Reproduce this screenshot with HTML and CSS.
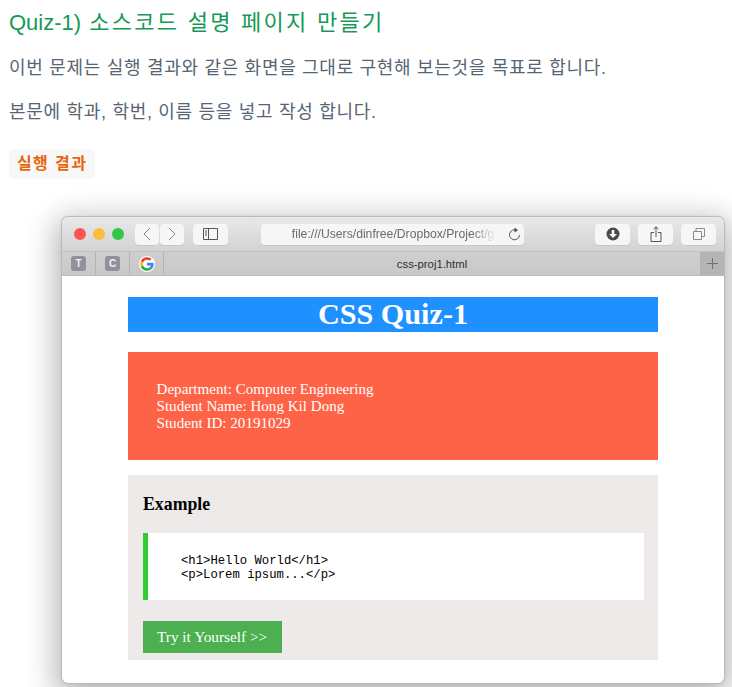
FILE: index.html
```html
<!DOCTYPE html>
<html lang="ko">
<head>
<meta charset="utf-8">
<title>Quiz-1</title>
<link rel="stylesheet" href="styles.css">
</head>
<body>
<main class="doc">
  <h2 class="title">Quiz-1) <span class="title-ko">소스코드 설명 페이지 만들기</span></h2>
  <p class="para">이번 문제는 실행 결과와 같은 화면을 그대로 구현해 보는것을 목표로 합니다.</p>
  <p class="para">본문에 학과, 학번, 이름 등을 넣고 작성 합니다.</p>
  <p class="tag-row"><code class="tag">실행 결과</code></p>

  <section class="window">
    <div class="toolbar">
      <div class="lights">
        <span class="light red"></span><span class="light yellow"></span><span class="light green"></span>
      </div>
      <div class="nav-group">
        <span class="btn nav"><svg width="10" height="14" viewBox="0 0 10 14"><path d="M8 1 2 7l6 6" class="ico"/></svg></span>
        <span class="btn nav"><svg width="10" height="14" viewBox="0 0 10 14"><path d="M2 1l6 6-6 6" class="ico"/></svg></span>
      </div>
      <span class="btn wide sidebar"><svg width="15" height="12" viewBox="0 0 15 12"><path d="M.5.5h14v11H.5zM5.500.5v11" class="ico-dark"/><path d="M2 3h2M2 5h2M2 7h2" class="ico-dark"/></svg></span>
      <div class="address">
        <span class="url">file:///Users/dinfree/Dropbox/Project/g</span>
        <svg class="reload" width="13" height="14" viewBox="0 0 13 14"><path d="M8.500 3.200A5 5 0 1 0 11.500 8" class="ico-dark"/><path d="M6.500 0.500 10 3.200 6.500 5.500z" class="fill-dark"/></svg>
      </div>
      <span class="btn wide"><svg width="14" height="14" viewBox="0 0 14 14"><circle cx="7" cy="7" r="6.500" class="fill-dark"/><path d="M5.700 3h2.600v4H11L7 11 3 7h2.700z" fill="#f6f6f6"/></svg></span>
      <span class="btn wide"><svg width="12" height="16" viewBox="0 0 12 16"><path d="M4 6.500H1v9h10v-9H8M6 11V1M3.500 3.200 6 .8l2.500 2.400" class="ico-dark"/></svg></span>
      <span class="btn wide"><svg width="12" height="12" viewBox="0 0 12 12"><path d="M.5 3.500h8v8h-8zM3 3.500V.5h8.500v8H8.500" class="ico"/></svg></span>
    </div>
    <div class="tabbar">
      <span class="fav"><span class="letter">T</span></span>
      <span class="fav"><span class="letter">C</span></span>
      <span class="fav google">
        <svg width="14" height="14" viewBox="0 0 48 48">
          <path fill="#EA4335" d="M24 9.500c3.500 0 6.700 1.200 9.200 3.600l6.900-6.900C35.900 2.400 30.500 0 24 0 14.600 0 6.500 5.400 2.600 13.200l8 6.200C12.400 13.700 17.700 9.500 24 9.500z"/>
          <path fill="#4285F4" d="M47 24.500c0-1.600-.1-3.100-.4-4.500H24v9h12.900c-.6 3-2.200 5.500-4.700 7.200l7.700 6c4.500-4.200 7.100-10.300 7.100-17.700z"/>
          <path fill="#FBBC05" d="M10.500 28.600c-.5-1.400-.8-3-.8-4.600s.3-3.200.8-4.600l-8-6.200C.9 16.500 0 20.100 0 24s.9 7.500 2.600 10.800l7.900-6.200z"/>
          <path fill="#34A853" d="M24 48c6.500 0 11.900-2.100 15.900-5.800l-7.700-6c-2.200 1.400-4.900 2.300-8.200 2.300-6.300 0-11.600-4.200-13.500-9.900l-8 6.200C6.500 42.600 14.600 48 24 48z"/>
        </svg>
      </span>
      <span class="tab-title">css-proj1.html</span>
      <span class="plus"><svg width="11" height="11" viewBox="0 0 11 11"><path d="M5.500 0v11M0 5.500h11" class="ico"/></svg></span>
    </div>
    <div class="viewport">
      <h1 class="banner">CSS Quiz-1</h1>
      <div class="student">
        Department: Computer Engineering<br>
        Student Name: Hong Kil Dong<br>
        Student ID: 20191029
      </div>
      <div class="example">
        <h3 class="example-title">Example</h3>
        <pre class="code">&lt;h1&gt;Hello World&lt;/h1&gt;
&lt;p&gt;Lorem ipsum...&lt;/p&gt;</pre>
        <a class="try">Try it Yourself &gt;&gt;</a>
      </div>
    </div>
  </section>
</main>
</body>
</html>
```

FILE: styles.css
```css
html, body {
  margin: 0;
  height: 687px;
  overflow: hidden;
  background: #fff;
}
.doc {
  padding: 9px 0 0 9px;
  font-family: "Liberation Sans", "Noto Sans CJK KR", sans-serif;
}
.title {
  margin: 0;
  font-size: 22px;
  line-height: 28px;
  font-weight: 400;
  color: #159957;
}
.title-ko {
  margin-left: 2px;
  letter-spacing: 2.27px;
}
.para {
  margin: 17px 0 0;
  font-size: 18px;
  line-height: 28px;
  letter-spacing: .7px;
  color: #566573;
}
.para + .para {
  margin-top: 16px;
}
.tag-row {
  margin: 23px 0 0;
  height: 30px;
}
.tag {
  display: inline-block;
  padding: 0 8px;
  height: 30px;
  line-height: 30px;
  background: #f8f8f8;
  border-radius: 4px;
  color: #e8650a;
  font-size: 16px;
  letter-spacing: 1.4px;
  font-weight: 700;
  font-family: "Liberation Sans", "Noto Sans CJK KR", sans-serif;
}

.window {
  margin: 38px 0 0 53px;
  width: 662px;
  height: 466px;
  border-radius: 6px;
  overflow: hidden;
  background: #fff;
  box-shadow: 0 0 1px 1px #b8b8b8, 0 8px 30px 6px rgba(0, 0, 0, .3);
  font-family: "Liberation Serif", serif;
  display: flex;
  flex-direction: column;
}
.toolbar {
  height: 35px;
  flex: none;
  box-sizing: border-box;
  background: linear-gradient(#e8e8e8, #d3d3d3);
  border-bottom: 1px solid #c4c4c4;
  display: flex;
  align-items: center;
  padding: 0 8px 0 12px;
}
.lights { display: flex; gap: 7px; width: 61px; }
.light { width: 12px; height: 12px; border-radius: 50%; }
.red { background: #fc5753; }
.yellow { background: #fdbc40; }
.green { background: #33c748; }
.nav-group { display: flex; gap: 1px; margin-right: 9px; }
.btn {
  height: 21px;
  background: #f6f6f6;
  border-radius: 4px;
  display: flex;
  align-items: center;
  justify-content: center;
  box-shadow: 0 1px 0 #c8c8c8;
}
.nav { width: 24px; }
.wide { width: 35px; }
.address {
  width: 264px;
  height: 21px;
  margin: 0 71px 0 33px;
  position: relative;
  background: #f6f6f6;
  border-radius: 4px;
  box-shadow: 0 1px 0 #c8c8c8;
  display: flex;
  align-items: center;
  font: 12.200px "Liberation Sans", sans-serif;
  color: #6b6b6b;
}
.url {
  width: 204px;
  margin-left: 31px;
  overflow: hidden;
  white-space: nowrap;
  -webkit-mask-image: linear-gradient(90deg, #000 88%, transparent);
  mask-image: linear-gradient(90deg, #000 88%, transparent);
}
.reload { margin-left: 12px; }
.wide + .wide { margin-left: 8px; }
.ico { fill: none; stroke: #8a8a8a; stroke-width: 1; }
.ico-dark { fill: none; stroke: #555; stroke-width: 1; }
.fill-dark { fill: #4a4a4a; }

.tabbar {
  height: 24px;
  flex: none;
  box-sizing: border-box;
  background: linear-gradient(#cfcfcf, #c8c8c8);
  border-bottom: 1px solid #bbb;
  display: flex;
  align-items: center;
}
.fav {
  width: 34px;
  height: 100%;
  box-sizing: border-box;
  border-right: 1px solid #b4b4b4;
  display: flex;
  align-items: center;
  justify-content: center;
}
.letter {
  width: 15px;
  height: 15px;
  border-radius: 3px;
  background: #8f919d;
  color: #f0f0f0;
  font: 700 10px/15px "Liberation Sans", sans-serif;
  text-align: center;
}
.google svg {
  background: #fff;
  border-radius: 50%;
  padding: 1px;
}
.tab-title {
  flex: 1;
  text-align: center;
  font: 11.300px "Liberation Sans", sans-serif;
  color: #2e2e2e;
}
.plus {
  width: 24px;
  height: 100%;
  background: #b4b4b4;
  display: flex;
  align-items: center;
  justify-content: center;
}
.plus .ico { stroke: #707070; }

.viewport {
  flex: 1;
  padding: 21px 66px 0;
}
.banner {
  margin: 0;
  height: 35px;
  background: #1e90ff;
  color: #fff;
  font-size: 30.200px;
  line-height: 35px;
  font-weight: 700;
  text-align: center;
}
.student {
  margin-top: 20px;
  height: 108px;
  box-sizing: border-box;
  padding: 29px 29px 0 28.500px;
  background: #ff6347;
  color: #fff;
  font-size: 15.100px;
  line-height: 17px;
}
.example {
  margin-top: 15px;
  height: 185px;
  box-sizing: border-box;
  padding: 18px 14px 0 15px;
  background: #edeae9;
}
.example-title {
  margin: 0;
  font-size: 17.800px;
  line-height: 22px;
  font-weight: 700;
  color: #000;
}
.code {
  margin: 18px 0 0;
  height: 67px;
  box-sizing: border-box;
  padding: 21px 0 0 33px;
  border-left: 5px solid #32cd32;
  background: #fff;
  font: 12.250px/14px "Liberation Mono", monospace;
  color: #000;
}
.try {
  display: block;
  margin-top: 21px;
  width: 139px;
  height: 32px;
  box-sizing: border-box;
  padding-left: 14px;
  background: #4caf50;
  color: #fff;
  font-size: 15.300px;
  line-height: 32px;
}
```
